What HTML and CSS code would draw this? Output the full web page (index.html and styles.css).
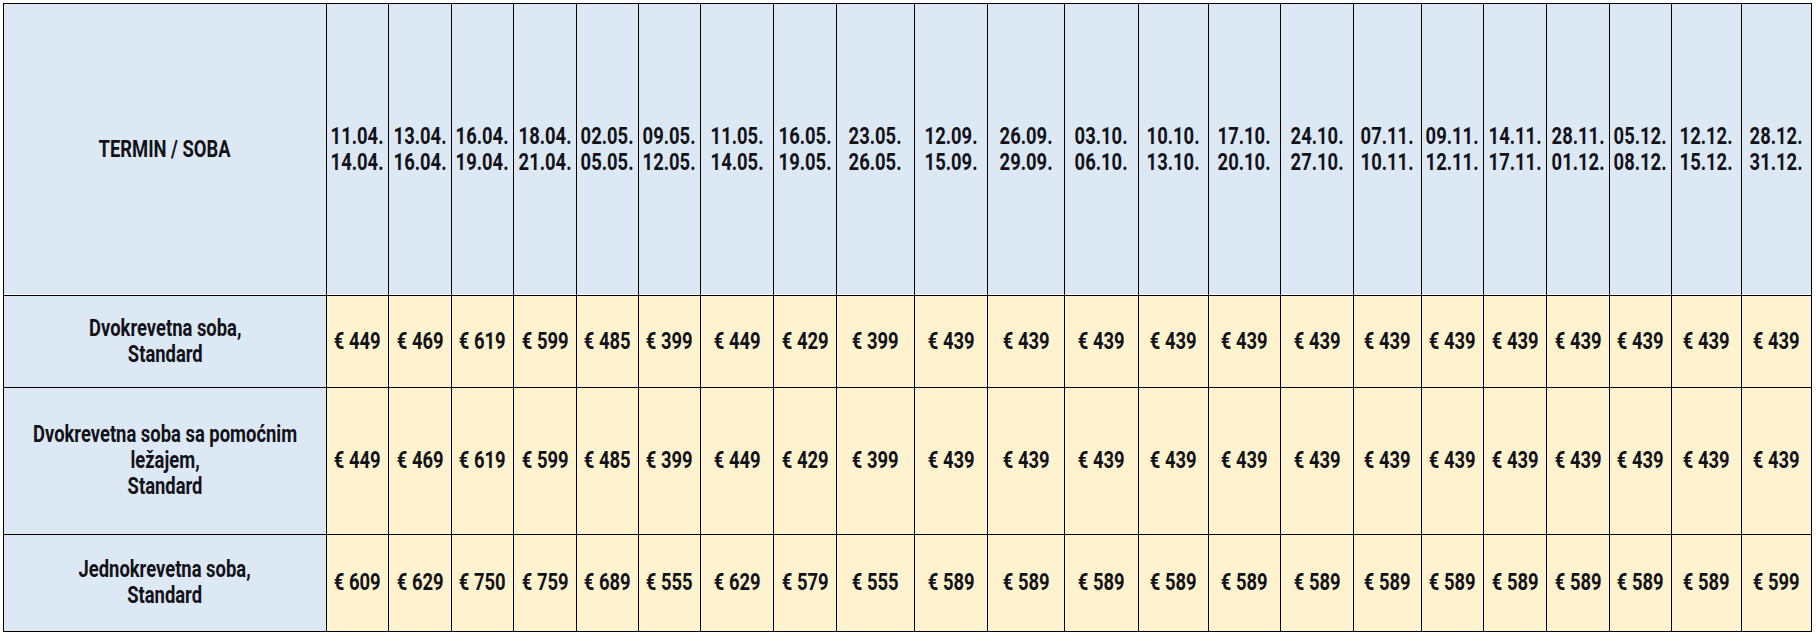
FILE: index.html
```html
<!DOCTYPE html>
<html lang="hr">
<head>
<meta charset="utf-8">
<title>Cjenik</title>
<link rel="stylesheet" href="styles.css">
</head>
<body>
<div class="price-table">
  <div class="cell head"><span class="txt">TERMIN / SOBA</span></div>
  <div class="cell head"><span class="txt">11.04.<br>14.04.</span></div>
  <div class="cell head"><span class="txt">13.04.<br>16.04.</span></div>
  <div class="cell head"><span class="txt">16.04.<br>19.04.</span></div>
  <div class="cell head"><span class="txt">18.04.<br>21.04.</span></div>
  <div class="cell head"><span class="txt">02.05.<br>05.05.</span></div>
  <div class="cell head"><span class="txt">09.05.<br>12.05.</span></div>
  <div class="cell head"><span class="txt">11.05.<br>14.05.</span></div>
  <div class="cell head"><span class="txt">16.05.<br>19.05.</span></div>
  <div class="cell head"><span class="txt">23.05.<br>26.05.</span></div>
  <div class="cell head"><span class="txt">12.09.<br>15.09.</span></div>
  <div class="cell head"><span class="txt">26.09.<br>29.09.</span></div>
  <div class="cell head"><span class="txt">03.10.<br>06.10.</span></div>
  <div class="cell head"><span class="txt">10.10.<br>13.10.</span></div>
  <div class="cell head"><span class="txt">17.10.<br>20.10.</span></div>
  <div class="cell head"><span class="txt">24.10.<br>27.10.</span></div>
  <div class="cell head"><span class="txt">07.11.<br>10.11.</span></div>
  <div class="cell head"><span class="txt">09.11.<br>12.11.</span></div>
  <div class="cell head"><span class="txt">14.11.<br>17.11.</span></div>
  <div class="cell head"><span class="txt">28.11.<br>01.12.</span></div>
  <div class="cell head"><span class="txt">05.12.<br>08.12.</span></div>
  <div class="cell head"><span class="txt">12.12.<br>15.12.</span></div>
  <div class="cell head"><span class="txt">28.12.<br>31.12.</span></div>

  <div class="cell room"><span class="txt">Dvokrevetna soba,<br>Standard</span></div>
  <div class="cell price"><span class="txt">€ 449</span></div>
  <div class="cell price"><span class="txt">€ 469</span></div>
  <div class="cell price"><span class="txt">€ 619</span></div>
  <div class="cell price"><span class="txt">€ 599</span></div>
  <div class="cell price"><span class="txt">€ 485</span></div>
  <div class="cell price"><span class="txt">€ 399</span></div>
  <div class="cell price"><span class="txt">€ 449</span></div>
  <div class="cell price"><span class="txt">€ 429</span></div>
  <div class="cell price"><span class="txt">€ 399</span></div>
  <div class="cell price"><span class="txt">€ 439</span></div>
  <div class="cell price"><span class="txt">€ 439</span></div>
  <div class="cell price"><span class="txt">€ 439</span></div>
  <div class="cell price"><span class="txt">€ 439</span></div>
  <div class="cell price"><span class="txt">€ 439</span></div>
  <div class="cell price"><span class="txt">€ 439</span></div>
  <div class="cell price"><span class="txt">€ 439</span></div>
  <div class="cell price"><span class="txt">€ 439</span></div>
  <div class="cell price"><span class="txt">€ 439</span></div>
  <div class="cell price"><span class="txt">€ 439</span></div>
  <div class="cell price"><span class="txt">€ 439</span></div>
  <div class="cell price"><span class="txt">€ 439</span></div>
  <div class="cell price"><span class="txt">€ 439</span></div>

  <div class="cell room"><span class="txt">Dvokrevetna soba sa pomoćnim<br>ležajem,<br>Standard</span></div>
  <div class="cell price"><span class="txt">€ 449</span></div>
  <div class="cell price"><span class="txt">€ 469</span></div>
  <div class="cell price"><span class="txt">€ 619</span></div>
  <div class="cell price"><span class="txt">€ 599</span></div>
  <div class="cell price"><span class="txt">€ 485</span></div>
  <div class="cell price"><span class="txt">€ 399</span></div>
  <div class="cell price"><span class="txt">€ 449</span></div>
  <div class="cell price"><span class="txt">€ 429</span></div>
  <div class="cell price"><span class="txt">€ 399</span></div>
  <div class="cell price"><span class="txt">€ 439</span></div>
  <div class="cell price"><span class="txt">€ 439</span></div>
  <div class="cell price"><span class="txt">€ 439</span></div>
  <div class="cell price"><span class="txt">€ 439</span></div>
  <div class="cell price"><span class="txt">€ 439</span></div>
  <div class="cell price"><span class="txt">€ 439</span></div>
  <div class="cell price"><span class="txt">€ 439</span></div>
  <div class="cell price"><span class="txt">€ 439</span></div>
  <div class="cell price"><span class="txt">€ 439</span></div>
  <div class="cell price"><span class="txt">€ 439</span></div>
  <div class="cell price"><span class="txt">€ 439</span></div>
  <div class="cell price"><span class="txt">€ 439</span></div>
  <div class="cell price"><span class="txt">€ 439</span></div>

  <div class="cell room"><span class="txt">Jednokrevetna soba,<br>Standard</span></div>
  <div class="cell price"><span class="txt">€ 609</span></div>
  <div class="cell price"><span class="txt">€ 629</span></div>
  <div class="cell price"><span class="txt">€ 750</span></div>
  <div class="cell price"><span class="txt">€ 759</span></div>
  <div class="cell price"><span class="txt">€ 689</span></div>
  <div class="cell price"><span class="txt">€ 555</span></div>
  <div class="cell price"><span class="txt">€ 629</span></div>
  <div class="cell price"><span class="txt">€ 579</span></div>
  <div class="cell price"><span class="txt">€ 555</span></div>
  <div class="cell price"><span class="txt">€ 589</span></div>
  <div class="cell price"><span class="txt">€ 589</span></div>
  <div class="cell price"><span class="txt">€ 589</span></div>
  <div class="cell price"><span class="txt">€ 589</span></div>
  <div class="cell price"><span class="txt">€ 589</span></div>
  <div class="cell price"><span class="txt">€ 589</span></div>
  <div class="cell price"><span class="txt">€ 589</span></div>
  <div class="cell price"><span class="txt">€ 589</span></div>
  <div class="cell price"><span class="txt">€ 589</span></div>
  <div class="cell price"><span class="txt">€ 589</span></div>
  <div class="cell price"><span class="txt">€ 589</span></div>
  <div class="cell price"><span class="txt">€ 589</span></div>
  <div class="cell price"><span class="txt">€ 599</span></div>
</div>
</body>
</html>
```

FILE: styles.css
```css
html, body {
  margin: 0;
  background: #ffffff;
}

body {
  padding: 3px;
  font-family: Roboto, "Liberation Sans", sans-serif;
  font-weight: 700;
  font-size: 23px;
  line-height: 26px;
  color: #121219;
}

.price-table {
  display: grid;
  grid-template-columns: 322px 61px 62px 61px 62px 61px 61px 72px 62px 77px 72px 76px 73px 69px 71px 72px 67px 61px 62px 62px 61px 69px 69px;
  grid-template-rows: 291px 91px 146px 96px;
  gap: 1px;
  padding: 1px;
  background: #000000;
  width: max-content;
}

.cell {
  display: flex;
  align-items: center;
  justify-content: center;
  text-align: center;
  white-space: nowrap;
  overflow: visible;
}

.txt {
  display: inline-block;
  transform: scaleX(0.8);
  transform-origin: center;
}

.head {
  background: #dde8f5;
  box-shadow: inset 0 -1px 0 #ffffff;
}

.room {
  background: #dde8f5;
}

.price {
  background: #fff2cf;
}
```
